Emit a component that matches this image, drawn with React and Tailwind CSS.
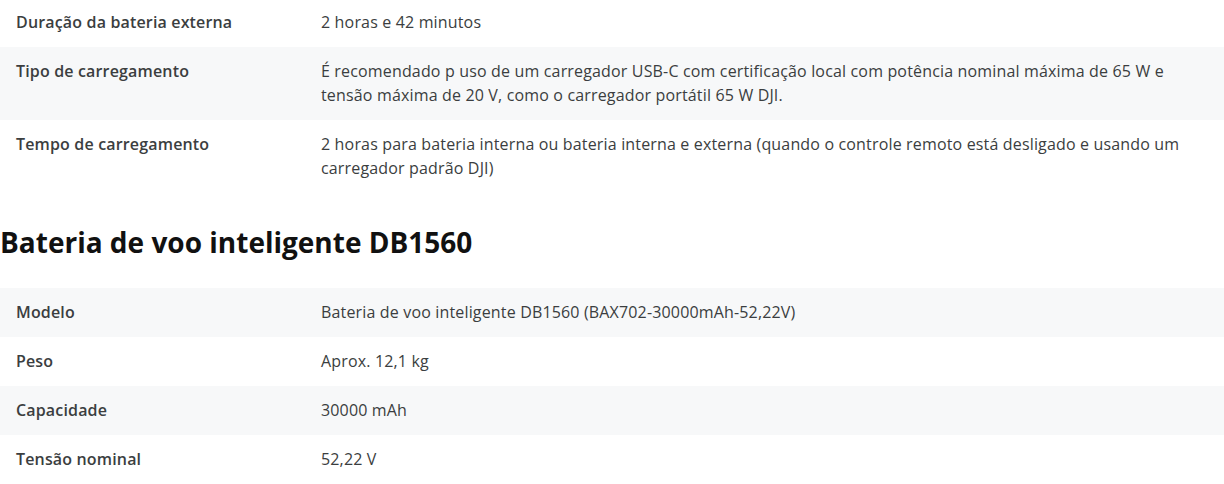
const charger = [
    { label: "Duração da bateria externa", value: "2 horas e 42 minutos" },
    { label: "Tipo de carregamento", value: "É recomendado p uso de um carregador USB-C com certificação local com potência nominal máxima de 65 W e tensão máxima de 20 V, como o carregador portátil 65 W DJI." },
    { label: "Tempo de carregamento", value: "2 horas para bateria interna ou bateria interna e externa (quando o controle remoto está desligado e usando um carregador padrão DJI)" },
];

const battery = [
    { label: "Modelo", value: "Bateria de voo inteligente DB1560 (BAX702-30000mAh-52,22V)" },
    { label: "Peso", value: "Aprox. 12,1 kg" },
    { label: "Capacidade", value: "30000 mAh" },
    { label: "Tensão nominal", value: "52,22 V" },
];

function SpecRow({ label, value, shaded }) {
    return (
        <div className={`flex px-4 pt-3 pb-[13px] text-base leading-6 tracking-[0.16px] text-[#3b3e40] ${shaded ? 'bg-[#f7f8f9]' : 'bg-white'}`}>
            <div className="w-[305px] shrink-0 font-semibold">{label}</div>
            <div className="flex-1 pr-4">{value}</div>
        </div>
    );
}

export default function App() {
    return (
        <div className="w-[1224px] h-[484px] overflow-hidden bg-white font-['Open_Sans',sans-serif]">
            <div className="-mt-[2px]">
                {charger.map((row, i) => (
                    <SpecRow key={i} {...row} shaded={i % 2 === 1} />
                ))}
            </div>
            <h2 className="mt-[28px] mb-[24px] text-[28px] leading-[43px] font-bold text-[#111]">
                Bateria de voo inteligente DB1560
            </h2>
            <div>
                {battery.map((row, i) => (
                    <SpecRow key={i} {...row} shaded={i % 2 === 0} />
                ))}
            </div>
        </div>
    );
}
